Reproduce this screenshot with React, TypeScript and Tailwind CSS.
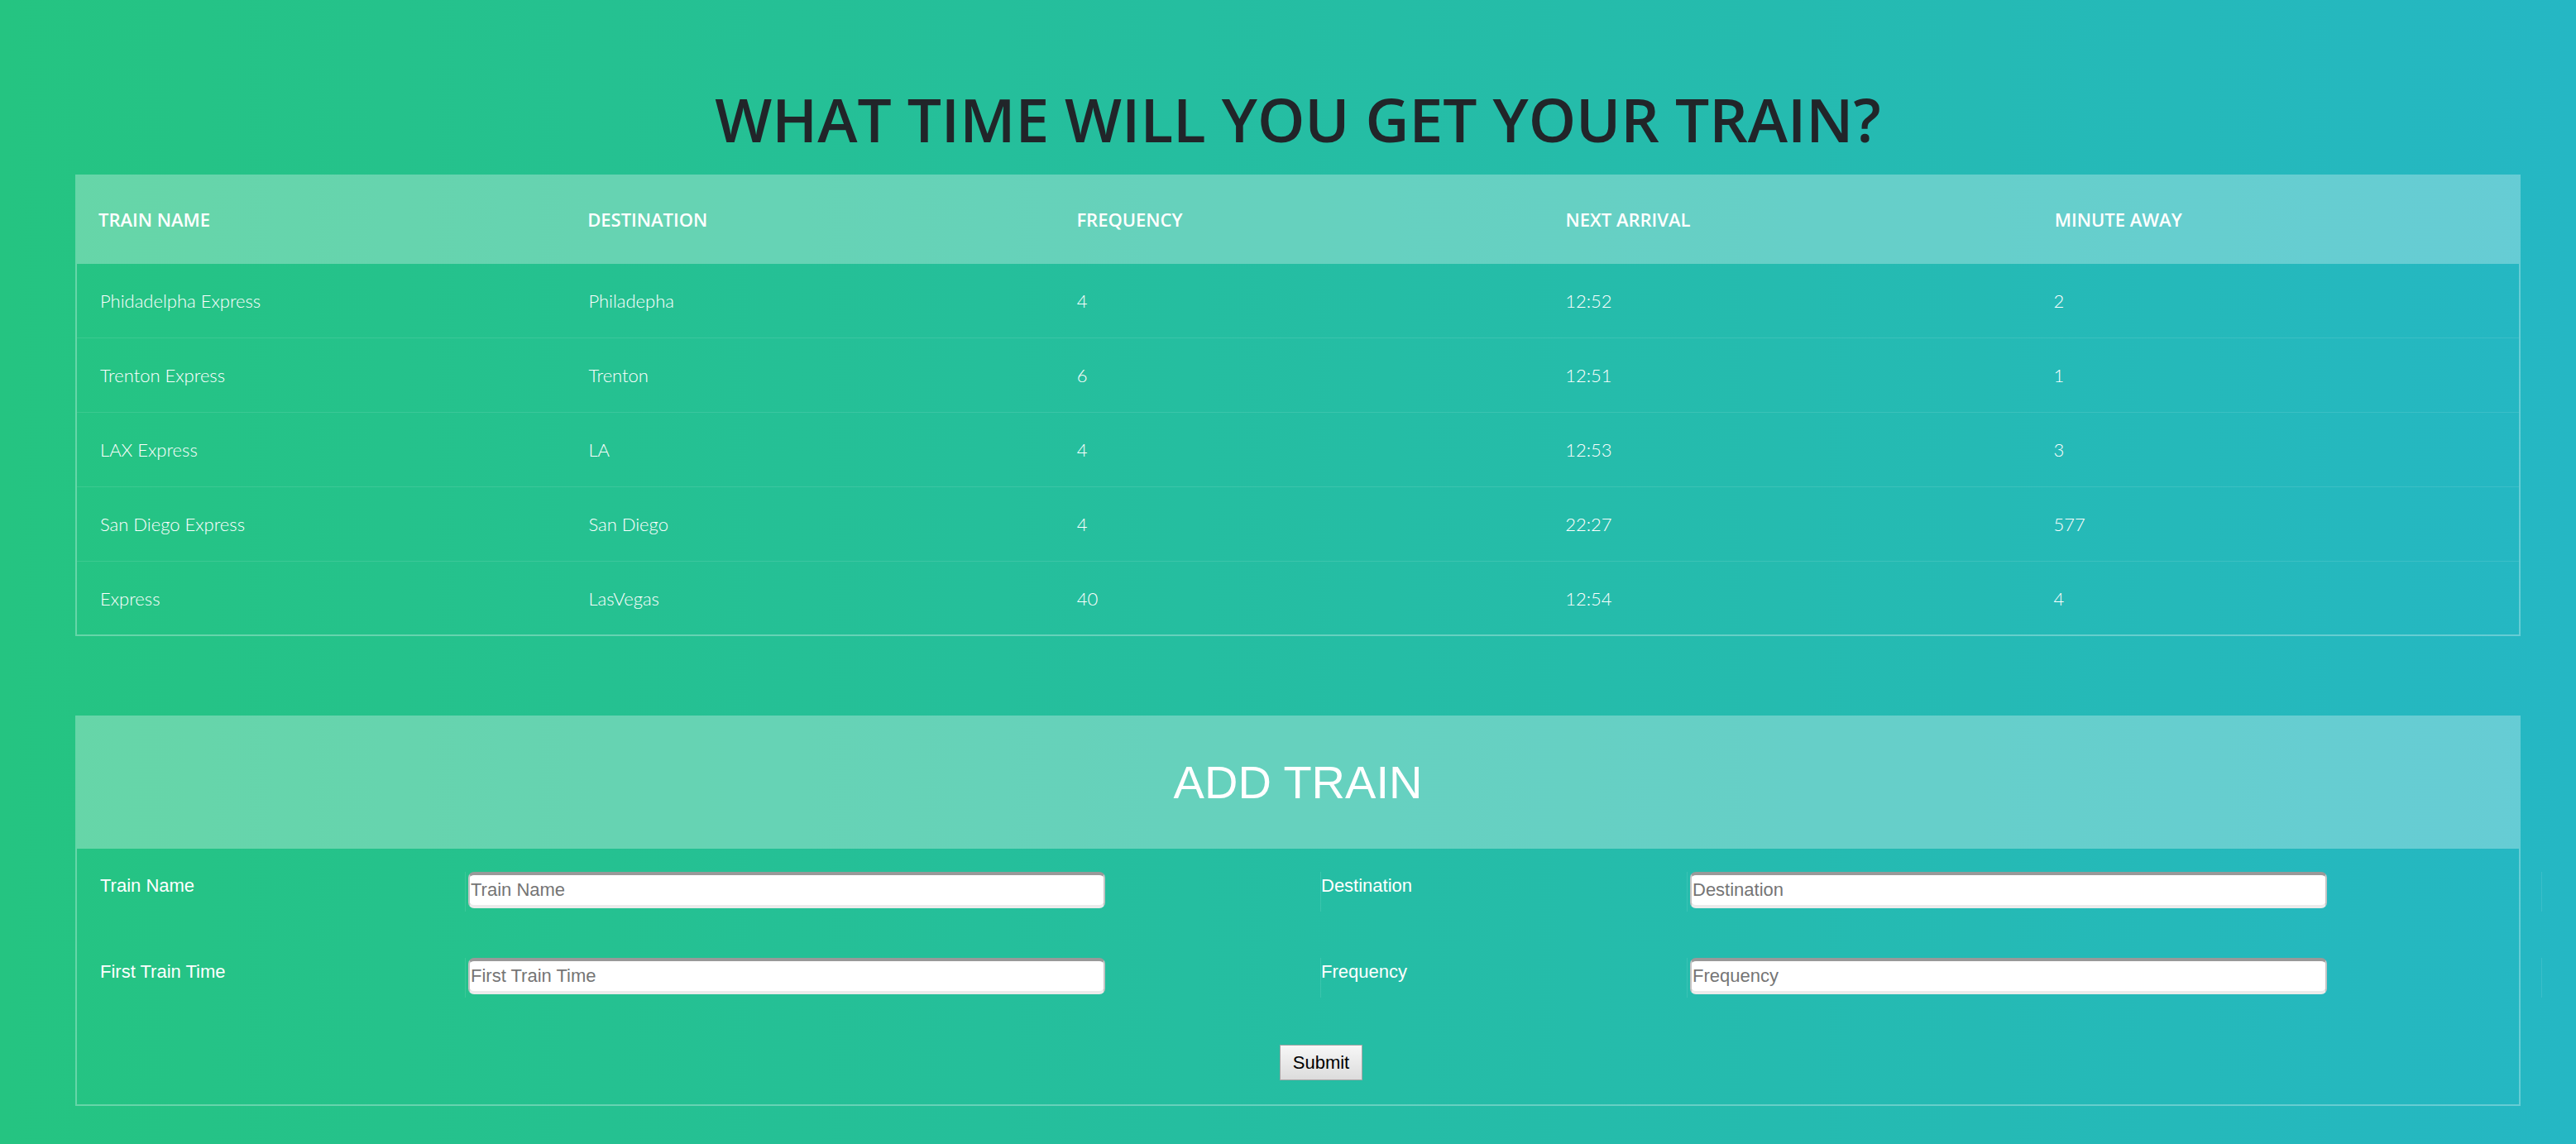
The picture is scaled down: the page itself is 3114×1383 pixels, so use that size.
const trains = [
  { name: "Phidadelpha Express", dest: "Philadepha", freq: "4", next: "12:52", away: "2" },
  { name: "Trenton Express", dest: "Trenton", freq: "6", next: "12:51", away: "1" },
  { name: "LAX Express", dest: "LA", freq: "4", next: "12:53", away: "3" },
  { name: "San Diego Express", dest: "San Diego", freq: "4", next: "22:27", away: "577" },
  { name: "Express", dest: "LasVegas", freq: "40", next: "12:54", away: "4" },
];

const headers = ["Train Name", "Destination", "Frequency", "Next Arrival", "Minute Away"];

const inputClass =
  "ml-[3px] h-[44px] w-[770px] rounded-[7px] border-x-2 border-t-4 border-b-4 border-x-[#c4c4c4] border-t-[#999999] border-b-[#ebebeb] bg-white px-[1px] font-['Liberation_Sans',Arial,sans-serif] text-[22px] text-black outline-none placeholder:text-[#757575]";

const labelClass = "pt-[3px] font-['Liberation_Sans',Arial,sans-serif] text-[22px] text-white";

const FormRow = ({ left, right }: { left: string; right: string }) => (
  <div className="ml-[28px] flex h-[48px] w-[2952px]">
    <div className="w-[441px] flex-none">
      <label className={labelClass}>{left}</label>
    </div>
    <div className="w-[1034px] flex-none border-l border-white/10">
      <input type="text" placeholder={left} className={inputClass} />
    </div>
    <div className="w-[443px] flex-none border-l border-white/10">
      <label className={labelClass}>{right}</label>
    </div>
    <div className="w-[1034px] flex-none border-x border-white/10">
      <input type="text" placeholder={right} className={inputClass} />
    </div>
  </div>
);

export default function App() {
  return (
    <div className="min-h-screen w-full bg-[linear-gradient(to_right,#25c481,#25b7c4)] pt-[107px] pb-[44px]">
      <section className="ml-[91px] w-[2956px]">
        <h1 className="text-center font-['Open_Sans',sans-serif] text-[73px] font-semibold leading-none text-[#212529]">
          WHAT TIME WILL YOU GET YOUR TRAIN?
        </h1>

        {/* train table */}
        <div className="mt-[31px]">
          <div className="grid h-[108px] grid-cols-5 items-center bg-white/30">
            {headers.map((h) => (
              <div
                key={h}
                className="px-[28px] font-['Open_Sans',sans-serif] text-[22px] font-semibold uppercase text-white"
              >
                {h}
              </div>
            ))}
          </div>
          <div className="border-x-2 border-b-2 border-white/30">
            {trains.map((t) => (
              <div
                key={t.name}
                className="grid h-[90px] grid-cols-5 items-center border-b border-white/10 font-['Lato',sans-serif] text-[22px] font-light text-white last:h-[88px] last:border-b-0"
              >
                <div className="px-[28px]">{t.name}</div>
                <div className="px-[28px]">{t.dest}</div>
                <div className="px-[28px]">{t.freq}</div>
                <div className="px-[28px]">{t.next}</div>
                <div className="px-[28px]">{t.away}</div>
              </div>
            ))}
          </div>
        </div>

        {/* add train form */}
        <div className="mt-[96px]">
          <div className="flex h-[161px] items-center justify-center bg-white/30">
            <h2 className="font-['Liberation_Sans',Arial,sans-serif] text-[56px] text-white">ADD TRAIN</h2>
          </div>
          <form
            className="border-x-2 border-b-2 border-white/30 pt-[28px] pb-[29px]"
            onSubmit={(e) => e.preventDefault()}
          >
            <FormRow left="Train Name" right="Destination" />
            <div className="mt-[56px]">
              <FormRow left="First Train Time" right="Frequency" />
            </div>
            <div className="ml-[28px] mt-[57px] flex w-[2952px] justify-center">
              <button
                type="submit"
                className="h-[43px] w-[100px] border border-[#a6a6a6] bg-[linear-gradient(to_bottom,#f7f7f7,#dcdcdc)] font-['Liberation_Sans',Arial,sans-serif] text-[22px] text-black"
              >
                Submit
              </button>
            </div>
          </form>
        </div>
      </section>
    </div>
  );
}
